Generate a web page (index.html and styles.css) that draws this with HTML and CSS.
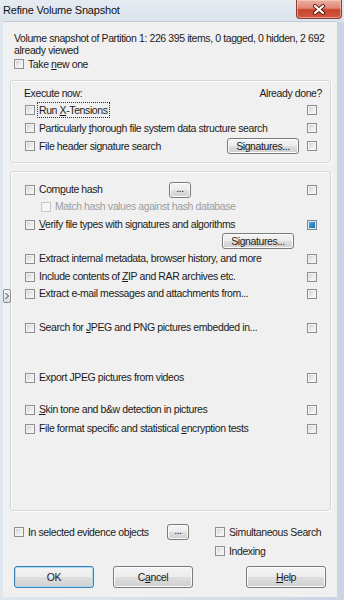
FILE: index.html
```html
<!DOCTYPE html>
<html>
<head>
<meta charset="utf-8">
<link rel="stylesheet" href="styles.css">
</head>
<body>
<div class="window">
  <div class="titlebar">
    <span class="title">Refine Volume Snapshot</span>
    <div class="close">
      <svg width="14" height="11" viewBox="0 0 14 11"><path d="M3 2 L11 9 M11 2 L3 9" stroke="#5a1a12" stroke-width="4" stroke-linecap="round"/><path d="M3 2 L11 9 M11 2 L3 9" stroke="#ffffff" stroke-width="2.2" stroke-linecap="round"/></svg>
    </div>
  </div>
  <div class="client">
    <div class="tab"><svg width="6" height="8" viewBox="0 0 6 8"><path d="M1.5 1 L4.5 4 L1.5 7" fill="none" stroke="#333" stroke-width="1"/></svg></div>

    <div class="intro">
      <p>Volume snapshot of Partition 1: 226 395 items, 0 tagged, 0 hidden, 2 692<br>already viewed</p>
      <div class="row take"><span class="cb"></span><span class="lbl">Take <u>n</u>ew one</span></div>
    </div>

    <div class="group g1">
      <div class="ghead"><span>Execute now:</span><span>Already done?</span></div>
      <div class="row"><span class="cb"></span><span class="lbl"><span class="focus">Run <u>X</u>-Tensions</span></span><span class="cb"></span></div>
      <div class="row"><span class="cb"></span><span class="lbl">Particularly <u>t</u>horough file system data structure search</span><span class="cb"></span></div>
      <div class="row"><span class="cb"></span><span class="lbl">File header signature search</span><span class="btn sig">Signatures...</span><span class="cb"></span></div>
    </div>

    <div class="group g2">
      <div class="row"><span class="cb"></span><span class="lbl">Com<u>p</u>ute hash</span><span class="btn dots hashdots">...</span><span class="cb"></span></div>
      <div class="row dis"><span class="cb"></span><span class="lbl">Match hash values against hash database</span></div>
      <div class="row mt1"><span class="cb"></span><span class="lbl"><u>V</u>erify file types with signatures and algorithms</span><span class="cb blue"></span></div>
      <div class="row btnrow"><span class="btn sig sig2">Signatures...</span></div>
      <div class="row mt1"><span class="cb"></span><span class="lbl">Extract internal metadata, browser history, and more</span><span class="cb"></span></div>
      <div class="row mt1"><span class="cb"></span><span class="lbl">Include contents of <u>Z</u>IP and RAR archives etc.</span><span class="cb"></span></div>
      <div class="row"><span class="cb"></span><span class="lbl">Extract e-mail messages and attachments from...</span><span class="cb"></span></div>
      <div class="row mt17"><span class="cb"></span><span class="lbl">Search for <u>J</u>PEG and PNG pictures embedded in...</span><span class="cb"></span></div>
      <div class="row mt33"><span class="cb"></span><span class="lbl">Export JPEG pictures from videos</span><span class="cb"></span></div>
      <div class="row mt15"><span class="cb"></span><span class="lbl"><u>S</u>kin tone and b&amp;w detection in pictures</span><span class="cb"></span></div>
      <div class="row mt2"><span class="cb"></span><span class="lbl">File format specific and statistical <u>e</u>ncryption tests</span><span class="cb"></span></div>
    </div>

    <div class="bottom">
      <div class="row"><span class="cb"></span><span class="lbl">In selected evidence objects</span><span class="btn dots evdots">...</span></div>
      <div class="row"><span class="cb"></span><span class="lbl">Simultaneous Search</span></div>
      <div class="row"></div>
      <div class="row"><span class="cb"></span><span class="lbl">Indexing</span></div>
    </div>

    <div class="buttons">
      <span class="btn big default">OK</span>
      <span class="btn big cancel">C<u>a</u>ncel</span>
      <span class="btn big help"><u>H</u>elp</span>
    </div>
  </div>
</div>
</body>
</html>
```

FILE: styles.css
```css
html, body {
  margin: 0;
  padding: 0;
}
body {
  font-family: "Liberation Sans", Arial, sans-serif;
  font-size: 10.5px;
  letter-spacing: -0.4px;
  color: #1b1b1b;
  background: #d4dee9;
}
u {
  text-decoration-thickness: 1px;
  text-underline-offset: 1px;
}
.window {
  width: 344px;
  height: 600px;
  box-sizing: border-box;
  display: flex;
  flex-direction: column;
  padding-bottom: 3px;
  background: linear-gradient(90deg, #dfe6ee 0%, #d6dfe9 60%, #c9d5e2 100%);
}
.titlebar {
  height: 22px;
  flex: none;
  display: flex;
  align-items: flex-start;
  background: linear-gradient(#e6ebf1, #dbe3ec);
}
.title {
  margin: 4px 0 0 3px;
  font-size: 11px;
  letter-spacing: -0.2px;
  line-height: 13px;
  color: #111;
}
.close {
  margin-left: auto;
  margin-right: 2px;
  width: 46px;
  height: 19px;
  box-sizing: border-box;
  border: 1px solid #8c3b30;
  border-top: none;
  border-radius: 0 0 4px 4px;
  background: linear-gradient(#eab0a3 0%, #de8775 45%, #c8432c 55%, #d25a40 100%);
  box-shadow: inset 0 0 0 1px rgba(255, 220, 210, 0.5);
  display: flex;
  align-items: center;
  justify-content: center;
}
.client {
  flex: 1;
  margin: 0 7px 0 3px;
  background: #f0f0f0;
  position: relative;
  box-shadow: 0 -1px 0 #c3ccd6;
}
.tab {
  position: absolute;
  left: 0;
  top: 267px;
  width: 8px;
  height: 14px;
  box-sizing: border-box;
  border: 1px solid #8d8d8d;
  border-radius: 2px;
  background: linear-gradient(#fafafa, #dedede);
  display: flex;
  align-items: center;
  justify-content: center;
}
.intro {
  padding: 10px 0 0 11px;
}
.intro p {
  margin: 0;
  line-height: 12px;
  white-space: nowrap;
}
.row {
  display: flex;
  align-items: center;
  height: 18px;
  white-space: nowrap;
}
.take {
  margin-top: 1px;
  height: 14px;
}
.cb {
  flex: none;
  width: 10px;
  height: 10px;
  box-sizing: border-box;
  border: 1px solid #8f8f8f;
  background: linear-gradient(135deg, #cdcdcd 0%, #ececec 55%, #fbfbfb 100%);
  box-shadow: inset 0 0 0 1px #f3f3f3;
}
.cb.blue {
  border-color: #7b8894;
  background: linear-gradient(135deg, #63b7e6 0%, #2b86c4 55%, #1b65a3 100%);
  box-shadow: inset 0 0 0 1px #dbe6ee;
}
.lbl {
  flex: 1;
  margin-left: 4px;
  line-height: 13px;
}
.focus {
  outline: 1px dotted #333;
  outline-offset: 1px;
}
.dis .cb {
  margin-left: 16px;
  border-color: #c9c9c9;
  background: #f5f5f5;
  box-shadow: none;
}
.dis .lbl {
  color: #9d9d9d;
}
.btn {
  flex: none;
  box-sizing: border-box;
  display: flex;
  align-items: center;
  justify-content: center;
  border: 1px solid #7a7a7a;
  border-radius: 3px;
  background: linear-gradient(#f4f4f4 0%, #ececec 50%, #dedede 51%, #d0d0d0 100%);
  box-shadow: inset 0 0 0 1px #fbfbfb;
  line-height: 13px;
}
.sig {
  width: 72px;
  height: 16px;
  margin-right: 8px;
}
.btnrow {
  height: 16px;
  justify-content: flex-end;
}
.sig2 {
  margin-right: 23px;
}
.dots {
  width: 22px;
  height: 16px;
  padding-bottom: 3px;
}
.hashdots {
  margin-right: 116px;
}
.g1 .ghead {
  display: flex;
  justify-content: space-between;
  line-height: 12px;
  margin: 0 -5px 2px -1px;
}
.group {
  margin-left: 7px;
  width: 321px;
  box-sizing: border-box;
  border: 1px solid #d3d8dd;
  border-radius: 3px;
  box-shadow: inset 1px 1px 0 #fdfdfd, 1px 1px 0 #fdfdfd;
}
.g1 {
  margin-top: 9px;
  padding: 6px 13px 7px 14px;
}
.g2 {
  margin-top: 8px;
  height: 340px;
  padding: 9px 13px 0 14px;
}
.g2 .row {
  height: 17px;
}
.g2 .row.btnrow {
  height: 16px;
}
.mt1 { margin-top: 1px; }
.mt2 { margin-top: 2px; }
.mt15 { margin-top: 15px; }
.mt17 { margin-top: 17px; }
.mt33 { margin-top: 33px; }
.bottom {
  margin-top: 13px;
  padding-left: 11px;
  display: grid;
  grid-template-columns: 201px 1fr;
  row-gap: 3px;
}
.bottom .row {
  height: 16px;
}
.evdots {
  margin-right: 26px;
}
.buttons {
  display: flex;
  margin-top: 7px;
  padding: 0 11px;
}
.big {
  width: 80px;
  height: 22px;
}
.default {
  border-color: #3c7fb1;
  box-shadow: inset 0 0 0 1px #a9dcf4;
}
.cancel {
  margin-left: 19px;
}
.help {
  margin-left: auto;
}
```
